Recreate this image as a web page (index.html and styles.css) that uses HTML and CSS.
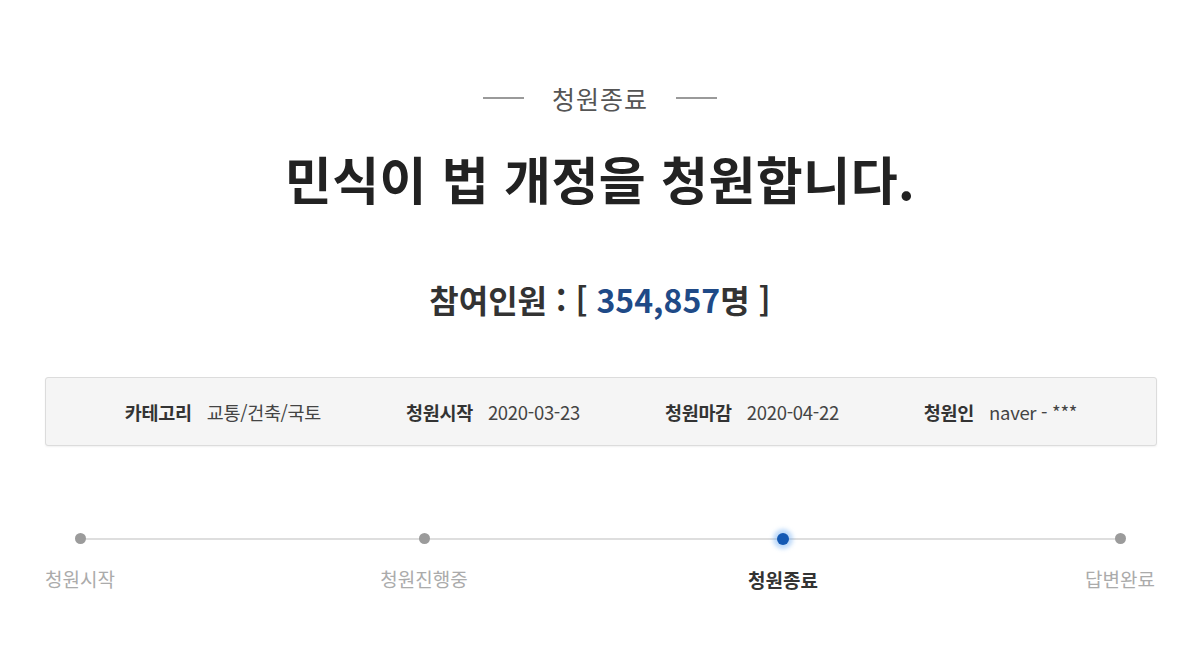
FILE: index.html
```html
<!DOCTYPE html>
<html lang="ko">
<head>
<meta charset="utf-8">
<title>청원</title>
<link rel="stylesheet" href="styles.css">
</head>
<body>
<main class="page">
  <div class="status"><span class="rule"></span><span class="status-text">청원종료</span><span class="rule"></span></div>
  <h1 class="title">민식이 법 개정을 청원합니다.</h1>
  <p class="count">참여인원 : [ <span class="num">354,857</span>명 ]</p>
  <ul class="info">
    <li><strong>카테고리</strong><span>교통/건축/국토</span></li>
    <li><strong>청원시작</strong><span>2020-03-23</span></li>
    <li><strong>청원마감</strong><span>2020-04-22</span></li>
    <li><strong>청원인</strong><span>naver - ***</span></li>
  </ul>
  <div class="progress">
    <div class="step"><i class="dot"></i><span class="label">청원시작</span></div>
    <div class="seg s1"></div>
    <div class="step"><i class="dot"></i><span class="label">청원진행중</span></div>
    <div class="seg s2"></div>
    <div class="step active"><i class="dot"></i><span class="label">청원종료</span></div>
    <div class="seg s3"></div>
    <div class="step"><i class="dot"></i><span class="label">답변완료</span></div>
  </div>
</main>
</body>
</html>
```

FILE: styles.css
```css
* { box-sizing: border-box; }
html, body { margin: 0; padding: 0; background: #fff; }
body {
  font-family: "Noto Sans CJK KR", "Noto Sans", sans-serif;
  color: #222;
  width: 1200px;
  height: 660px;
  overflow: hidden;
}
.page { padding-top: 83px; }
.status {
  display: flex;
  justify-content: center;
  align-items: center;
  gap: 28px;
  height: 30px;
}
.rule { width: 41px; height: 2px; background: #9a9a9a; }
.status-text { font-size: 25px; line-height: 30px; color: #555; letter-spacing: 1px; }
.title {
  margin: 34px 0 0;
  text-align: center;
  font-size: 51px;
  line-height: 62px;
  font-weight: 700;
  color: #222;
  letter-spacing: 0.5px;
}
.count {
  margin: 70px 0 0;
  text-align: center;
  font-size: 32px;
  line-height: 40px;
  font-weight: 700;
  color: #333;
}
.num { color: #1f4a87; }
.info {
  list-style: none;
  margin: 58px 43px 0 45px;
  padding: 0;
  height: 69px;
  background: #f5f5f5;
  border: 1px solid #dcdcdc;
  border-radius: 3px;
  box-shadow: 0 1px 2px rgba(0,0,0,0.06);
  display: flex;
  justify-content: center;
  align-items: center;
  gap: 85px;
  font-size: 18.5px;
  letter-spacing: -0.3px;
}
.info li { display: flex; gap: 15px; align-items: center; }
.info strong { font-weight: 700; color: #333; }
.info span { color: #444; }
.progress {
  display: flex;
  align-items: flex-start;
  margin: 87px 80px 0;
}
.step {
  width: 0;
  display: flex;
  flex-direction: column;
  align-items: center;
}
.dot {
  display: block;
  position: relative;
  z-index: 1;
  width: 11px;
  height: 11px;
  border-radius: 50%;
  background: #9b9b9b;
  flex-shrink: 0;
}
.step.active .dot {
  width: 12px;
  height: 12px;
  margin-top: -0.5px;
  background: #1459b3;
  box-shadow: 0 0 4px 4px rgba(90,160,240,0.4);
}
.label {
  white-space: nowrap;
  margin-top: 23px;
  font-size: 19px;
  line-height: 24px;
  color: #ababab;
}
.step.active .label { color: #333; font-weight: 700; }
.seg { height: 2px; background: #dedede; margin-top: 4.5px; }
.s1 { flex: 344 1 0; }
.s2 { flex: 359 1 0; }
.s3 { flex: 337 1 0; }
```
